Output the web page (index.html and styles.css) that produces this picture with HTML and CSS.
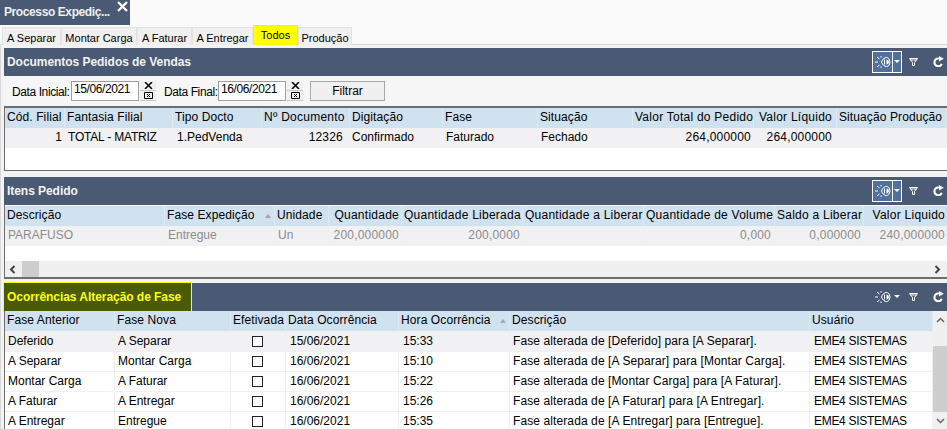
FILE: index.html
```html
<!DOCTYPE html>
<html lang="pt">
<head>
<meta charset="utf-8">
<title>Processo Expedição</title>
<link rel="stylesheet" href="styles.css">
</head>
<body>
<svg class="defs" width="0" height="0" aria-hidden="true">
  <symbol id="eye" viewBox="0 0 18 14">
    <path d="M1 7h3M3 2l2.500 2M3 12l2.500-2M7 1v1.500M7 11.500V13" stroke="#fff" fill="none"/>
    <path d="M7.500 7c1-3 3-4.500 5-4.500S15.500 4 16 7c-.5 3-1.500 4.500-3.500 4.500S8.500 10 7.500 7z" stroke="#fff" fill="none"/>
    <path d="M12.500 4.500a2.500 2.500 0 0 1 0 5z" fill="#fff"/>
    <path d="M10.500 4.500v5" stroke="#fff"/>
  </symbol>
  <symbol id="funnel" viewBox="0 0 9 8">
    <path d="M.5.500h8L5.500 4.500v3h-2v-3z" stroke="#fff" fill="none"/>
    <path d="M1.500 2h6" stroke="#fff"/>
  </symbol>
  <symbol id="redo" viewBox="0 0 11 11">
    <path d="M8.800 7.800A3.800 3.800 0 1 1 6 2.600" stroke="#fff" stroke-width="2" fill="none"/>
    <path d="M6 0l4.800 2.700L6 5.500z" fill="#fff"/>
  </symbol>
</svg>

<header class="doc-tab">
  <span class="doc-tab-label">Processo Expediç...</span>
  <svg class="doc-tab-close" width="11" height="11" viewBox="0 0 11 11"><path d="M1 1l9 9M10 1l-9 9" stroke="#fff" stroke-width="2.400"/></svg>
</header>

<nav class="tabs">
  <span class="tab tab-1">A Separar</span>
  <span class="tab tab-2">Montar Carga</span>
  <span class="tab tab-3">A Faturar</span>
  <span class="tab tab-4">A Entregar</span>
  <span class="tab tab-active">Todos</span>
  <span class="tab tab-6">Produção</span>
</nav>

<main class="pane">
  <section class="panel">
    <div class="bar">
      <h2 class="bar-title">Documentos Pedidos de Vendas</h2>
      <div class="bar-tools">
        <span class="view-btn view-btn-on"><svg class="eye-icon"><use href="#eye"/></svg></span><span class="drop-btn drop-btn-on"></span>
        <svg class="funnel-icon"><use href="#funnel"/></svg>
        <svg class="redo-icon"><use href="#redo"/></svg>
      </div>
    </div>
    <div class="filters">
      <label class="filter-label">Data Inicial:</label>
      <span class="date-field">15/06/2021</span>
      <span class="date-btns">
        <span class="date-btn date-x">
          <svg width="9" height="7" viewBox="0 0 9 7"><path d="M1 0l7 7M8 0L1 7" stroke="#000" stroke-width="1.500"/></svg>
        </span>
        <span class="date-btn date-cal">
          <svg width="9" height="7" viewBox="0 0 9 7"><path d="M.5.500h8v6h-8z" stroke="#000" fill="none"/><path d="M3 2h1v1H3zM5 2h1v1H5zM4 3h1v1H4zM3 4h1v1H3zM5 4h1v1H5z"/></svg>
        </span>
      </span>
      <label class="filter-label filter-label-2">Data Final:</label>
      <span class="date-field">16/06/2021</span>
      <span class="date-btns">
        <span class="date-btn date-x">
          <svg width="9" height="7" viewBox="0 0 9 7"><path d="M1 0l7 7M8 0L1 7" stroke="#000" stroke-width="1.500"/></svg>
        </span>
        <span class="date-btn date-cal">
          <svg width="9" height="7" viewBox="0 0 9 7"><path d="M.5.500h8v6h-8z" stroke="#000" fill="none"/><path d="M3 2h1v1H3zM5 2h1v1H5zM4 3h1v1H4zM3 4h1v1H3zM5 4h1v1H5z"/></svg>
        </span>
      </span>
      <button class="filter-btn" type="button">Filtrar</button>
    </div>
    <div class="grid grid-docs">
      <div class="row head">
        <span>Cód. Filial</span><span>Fantasia Filial</span><span>Tipo Docto</span><span class="r">Nº Documento</span><span>Digitação</span><span>Fase</span><span>Situação</span><span class="r">Valor Total do Pedido</span><span class="r">Valor Líquido</span><span>Situação Produção</span>
      </div>
      <div class="row sel">
        <span class="r">1</span><span>TOTAL - MATRIZ</span><span>1.PedVenda</span><span class="r">12326</span><span>Confirmado</span><span>Faturado</span><span>Fechado</span><span class="r">264,000000</span><span class="r">264,000000</span><span></span>
      </div>
    </div>
  </section>

  <section class="panel panel-items">
    <div class="bar">
      <h2 class="bar-title">Itens Pedido</h2>
      <div class="bar-tools">
        <span class="view-btn view-btn-on"><svg class="eye-icon"><use href="#eye"/></svg></span><span class="drop-btn drop-btn-on"></span>
        <svg class="funnel-icon"><use href="#funnel"/></svg>
        <svg class="redo-icon"><use href="#redo"/></svg>
      </div>
    </div>
    <div class="grid grid-items">
      <div class="row head">
        <span>Descrição</span><span class="sorted">Fase Expedição<i class="sort-mark"></i></span><span>Unidade</span><span class="r">Quantidade</span><span class="r">Quantidade Liberada</span><span class="r">Quantidade a Liberar</span><span class="r">Quantidade de Volume</span><span class="r">Saldo a Liberar</span><span class="r">Valor Liquido</span>
      </div>
      <div class="row sel muted">
        <span>PARAFUSO</span><span>Entregue</span><span>Un</span><span class="r">200,000000</span><span class="r">200,0000</span><span></span><span class="r">0,000</span><span class="r">0,000000</span><span class="r">240,000000</span>
      </div>
      <div class="hscroll">
        <span class="hscroll-arrow"><svg width="7" height="9" viewBox="0 0 7 9"><path d="M5.500 1L2 4.500 5.500 8" stroke="#444" stroke-width="2" fill="none"/></svg></span>
        <span class="hscroll-thumb"></span>
        <span class="hscroll-arrow hscroll-end"><svg width="7" height="9" viewBox="0 0 7 9"><path d="M1.500 1L5 4.500 1.500 8" stroke="#444" stroke-width="2" fill="none"/></svg></span>
      </div>
    </div>
  </section>

  <section class="panel panel-log">
    <div class="bar">
      <h2 class="bar-title bar-title-mark">Ocorrências Alteração de Fase</h2>
      <div class="bar-tools">
        <span class="view-btn"><svg class="eye-icon"><use href="#eye"/></svg></span><span class="drop-btn"></span>
        <svg class="funnel-icon"><use href="#funnel"/></svg>
        <svg class="redo-icon"><use href="#redo"/></svg>
      </div>
    </div>
    <div class="log-body">
      <div class="grid grid-log">
        <div class="row head">
          <span>Fase Anterior</span><span>Fase Nova</span><span class="c">Efetivada</span><span>Data Ocorrência</span><span class="sorted">Hora Ocorrência<i class="sort-mark"></i></span><span>Descrição</span><span>Usuário</span>
        </div>
        <div class="row sel">
          <span>Deferido</span><span>A Separar</span><span class="c"><i class="check"></i></span><span>15/06/2021</span><span>15:33</span><span>Fase alterada de [Deferido] para [A Separar].</span><span>EME4 SISTEMAS</span>
        </div>
        <div class="row">
          <span>A Separar</span><span>Montar Carga</span><span class="c"><i class="check"></i></span><span>16/06/2021</span><span>15:10</span><span>Fase alterada de [A Separar] para [Montar Carga].</span><span>EME4 SISTEMAS</span>
        </div>
        <div class="row">
          <span>Montar Carga</span><span>A Faturar</span><span class="c"><i class="check"></i></span><span>16/06/2021</span><span>15:22</span><span>Fase alterada de [Montar Carga] para [A Faturar].</span><span>EME4 SISTEMAS</span>
        </div>
        <div class="row">
          <span>A Faturar</span><span>A Entregar</span><span class="c"><i class="check"></i></span><span>16/06/2021</span><span>15:26</span><span>Fase alterada de [A Faturar] para [A Entregar].</span><span>EME4 SISTEMAS</span>
        </div>
        <div class="row">
          <span>A Entregar</span><span>Entregue</span><span class="c"><i class="check"></i></span><span>16/06/2021</span><span>15:35</span><span>Fase alterada de [A Entregar] para [Entregue].</span><span>EME4 SISTEMAS</span>
        </div>
      </div>
      <div class="vscroll">
        <svg class="vscroll-up" width="9" height="6" viewBox="0 0 9 6"><path d="M1 5l3.500-3.500L8 5" stroke="#666" stroke-width="1.500" fill="none"/></svg>
        <span class="vscroll-thumb"></span>
        <svg class="vscroll-down" width="9" height="6" viewBox="0 0 9 6"><path d="M1 1l3.500 3.500L8 1" stroke="#666" stroke-width="1.500" fill="none"/></svg>
      </div>
    </div>
  </section>
</main>
</body>
</html>
```

FILE: styles.css
```css
* { box-sizing: border-box; }
html, body { margin: 0; height: 429px; overflow: hidden; }
body {
  width: 947px;
  background: #fafafa;
  color: #000;
  font: 12px/16px "Liberation Sans", Arial, sans-serif;
}
.defs { position: absolute; }

.doc-tab {
  width: 130px;
  height: 25px;
  background: #4a5a74;
  color: #f0f0f0;
  font-weight: 700;
  display: flex;
  padding: 4px 0 0 4px;
  white-space: nowrap;
}
.doc-tab-label { width: 113px; flex: none; letter-spacing: -.4px; }
.doc-tab-close { margin: -3px 0 0 0; flex: none; }

.tabs {
  height: 20px;
  padding: 2px 0 0 2px;
  display: flex;
  border-bottom: 1px solid #d8d8d8;
  font-size: 11px;
}
.tab {
  height: 18px;
  background: #f0f0f0;
  border: 1px solid #e3e3e3;
  border-bottom: 0;
  padding: 2px 0 0 0;
  text-align: center;
  white-space: nowrap;
}
.tab-1 { width: 59px; }
.tab-2 { width: 76px; }
.tab-3 { width: 55px; }
.tab-4 { width: 61px; }
.tab-active {
  width: 45px;
  height: 20px;
  margin-top: -2px;
  background: #ffff00;
  padding-top: 1px;
  border-color: #d8d8d8;
}
.tab-6 { width: 54px; }

.pane {
  padding: 3px 0 0 3px;
  border-left: 1px solid #d8d8d8;
  background: #f3f3f3;
  height: 384px;
}
.panel { display: flex; flex-direction: column; }
.panel-items { margin-top: 6px; }
.panel-log { margin-top: 4px; }

.bar {
  height: 28px;
  background: #4a5a74;
  color: #f2f2f2;
  display: flex;
  align-items: center;
  justify-content: space-between;
  padding-left: 3px;
}
.bar-title {
  margin: 0;
  font: 700 12px/16px "Liberation Sans", Arial, sans-serif;
  letter-spacing: -.05px;
}
.bar-title-mark {
  align-self: stretch;
  margin: -1px 0 -1px -4px;
  padding: 6px 0 0 3px;
  width: 189px;
  height: 30px;
  background: #4a5a05;
  border: 1px solid #ffff00;
  color: #ffff00;
}
.bar-tools { display: flex; align-items: center; width: 75px; height: 24px; flex: none; margin-top: -1px; }
.view-btn {
  width: 20px;
  height: 22px;
  display: flex;
  align-items: center;
  justify-content: center;
  border: 1px solid transparent;
  border-right: 0;
}
.view-btn-on { background: #51709c; border-color: #fff; }
.drop-btn {
  width: 10px;
  height: 22px;
  border: 1px solid transparent;
  position: relative;
}
.drop-btn-on { background: #51709c; border-color: #fff; }
.drop-btn::after {
  content: "";
  position: absolute;
  left: 1px;
  top: 8px;
  border: 3px solid transparent;
  border-top: 3px solid #fff;
}
.eye-icon { width: 18px; height: 14px; }
.funnel-icon { width: 9px; height: 8px; margin-left: 7px; }
.redo-icon { width: 11px; height: 11px; margin-left: 15px; }

.filters {
  height: 29px;
  background: #f6f6f6;
  display: flex;
  align-items: center;
  padding-left: 8px;
  white-space: nowrap;
  margin-bottom: 1px;
}
.filter-label { width: 59px; flex: none; letter-spacing: -.4px; padding-top: 2px; }
.filter-label-2 { width: 54px; margin-left: 8px; }
.date-field {
  width: 68px;
  height: 20px;
  background: #fff;
  border: 1px solid #a0a0a0;
  padding: 0 0 0 2px;
  line-height: 15px;
  letter-spacing: -.4px;
}
.date-btns {
  width: 16px;
  height: 20px;
  margin-left: 1px;
  display: flex;
  flex-direction: column;
}
.date-btn { height: 10px; background: #f0f0f0; display: flex; align-items: center; justify-content: center; border-bottom: 1px solid #c8c8c8; }
.filter-btn {
  width: 75px;
  height: 20px;
  margin-left: 7px;
  background: #f0f0f0;
  border: 1px solid #a8a8a8;
  font: inherit;
  padding: 0;
  color: #000;
}

.grid {
  border: 1px solid #6e6e6e;
  border-right: 0;
  background: #fff;
  overflow: hidden;
}
.grid-docs { height: 65px; border-width: 2px 0 1px 1px; }
.grid-items { height: 74px; padding-top: 1px; border-width: 0 0 2px 1px; position: relative; }
.grid-log { border-width: 0 0 0 1px; flex: 1; height: 120px; min-width: 0; }

.row { display: grid; height: 20px; align-items: center; }
.row span { padding: 0 2px; white-space: nowrap; overflow: hidden; height: 100%; line-height: 19px; border-right: 1px solid #f0f0f0; }
.row:not(.head) span { padding-left: 3px; }
.head { background: #d0e1ef; }
.head span { border-right-color: #e0e9f1; letter-spacing: .1px; }
.head .r { letter-spacing: .25px; }
.sel { background: #f1f1f3; }
.muted { color: #8c8c8c; }
.r { text-align: right; letter-spacing: .2px; }
.c { text-align: center; }

.grid-docs .row { grid-template-columns: 60px 108px 89px 88px 93px 95px 95px 121px 83px 110px; }
.grid-docs .row span:nth-child(4) { padding-right: 6px; }
.grid-docs .row span:nth-child(9) { padding-right: 4px; }
.grid-docs .sel span:nth-child(2) { letter-spacing: -.2px; }
.grid-docs .sel span:nth-child(3) { padding-left: 4px; }
.grid-docs .sel span:nth-child(5) { padding-left: 2px; }

.grid-items .row { grid-template-columns: 160px 110px 54px 73px 121px 121px 131px 89px 84px; }
.grid-items .row span:nth-child(7) { padding-right: 3px; }

.grid-log .row { grid-template-columns: 110px 116px 55px 113px 111px 300px 123px; }
.grid-log .row:not(.head) { border-bottom: 1px solid #f0f0f0; }
.grid-log .row:not(.head) span:nth-child(4),
.grid-log .row:not(.head) span:nth-child(5),
.grid-log .row:not(.head) span:nth-child(7) { padding-left: 4px; }
.grid-log .row span:nth-child(6) { letter-spacing: .1px; }
.grid-log .row:not(.head) span:nth-child(7) { letter-spacing: -.3px; }
.grid-log .sel { height: 21px; }
.grid-log .sel span { line-height: 20px; }

.sorted { position: relative; }
.sort-mark {
  position: absolute;
  right: 3px;
  top: 8px;
  border: 3px solid transparent;
  border-top: 0;
  border-bottom: 4px solid #a8a8a8;
}
.check {
  display: inline-block;
  width: 11px;
  height: 11px;
  margin-right: 3px;
  border: 1px solid #222;
  background: #fff;
  vertical-align: -2px;
}

.hscroll {
  position: absolute;
  left: 0;
  right: 0;
  bottom: 0;
  height: 16px;
  background: #f0f0f0;
  display: flex;
  align-items: center;
}
.hscroll-arrow { width: 17px; height: 16px; display: flex; align-items: center; justify-content: center; padding-right: 3px; }
.hscroll-thumb { width: 17px; height: 16px; background: #cdcdcd; }
.hscroll-end { margin-left: auto; }

.log-body { display: flex; height: 120px; }
.vscroll {
  width: 14px;
  flex: none;
  background: #f0f0f0;
  display: flex;
  flex-direction: column;
  align-items: center;
}
.vscroll-up { margin-top: 6px; flex: none; }
.vscroll-thumb { width: 100%; height: 66px; margin-top: 23px; background: #cdcdcd; flex: none; }
.vscroll-down { margin-top: 6px; flex: none; }
```
